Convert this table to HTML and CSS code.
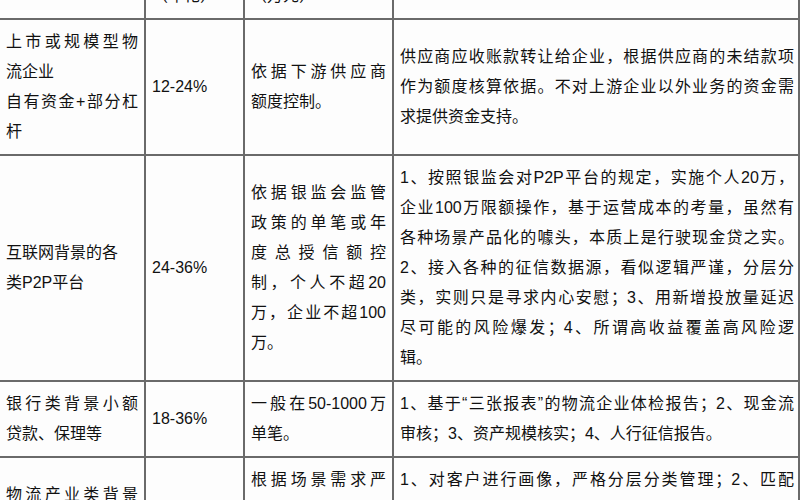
FILE: index.html
```html
<!DOCTYPE html>
<html lang="zh-CN">
<head>
<meta charset="utf-8">
<title>供应链金融对比</title>
<link rel="stylesheet" href="styles.css">
</head>
<body>
<table class="grid">
  <colgroup>
    <col class="c1"><col class="c2"><col class="c3"><col class="c4">
  </colgroup>
  <thead>
    <tr>
      <th>资金来源</th>
      <th><span class="ln end">资金成本</span><span class="ln end">（年化）</span></th>
      <th><span class="ln end">授信额度</span><span class="ln end">（万元）</span></th>
      <th>风控措施</th>
    </tr>
  </thead>
  <tbody>
    <tr>
      <td>
        <span class="ln">上市或规模型物</span><span class="ln end">流企业</span>
        <span class="ln">自有资金+部分杠</span><span class="ln end">杆</span>
      </td>
      <td>12-24%</td>
      <td><span class="ln">依据下游供应商</span><span class="ln end">额度控制。</span></td>
      <td class="wide">
        <span class="ln">供应商应收账款转让给企业，根据供应商的未结款项</span>
        <span class="ln">作为额度核算依据。不对上游企业以外业务的资金需</span>
        <span class="ln end">求提供资金支持。</span>
      </td>
    </tr>
    <tr>
      <td class="centered"><span class="ln end">互联网背景的各</span><span class="ln end">类P2P平台</span></td>
      <td>24-36%</td>
      <td>
        <span class="ln">依据银监会监管</span><span class="ln">政策的单笔或年</span>
        <span class="ln">度总授信额控</span><span class="ln">制，个人不超20</span>
        <span class="ln">万，企业不超100</span><span class="ln end">万。</span>
      </td>
      <td class="wide">
        <span class="ln">1、按照银监会对P2P平台的规定，实施个人20万，</span>
        <span class="ln">企业100万限额操作，基于运营成本的考量，虽然有</span>
        <span class="ln">各种场景产品化的噱头，本质上是行驶现金贷之实。</span>
        <span class="ln">2、接入各种的征信数据源，看似逻辑严谨，分层分</span>
        <span class="ln">类，实则只是寻求内心安慰；3、用新增投放量延迟</span>
        <span class="ln">尽可能的风险爆发；4、所谓高收益覆盖高风险逻</span>
        <span class="ln end">辑。</span>
      </td>
    </tr>
    <tr>
      <td><span class="ln">银行类背景小额</span><span class="ln end">贷款、保理等</span></td>
      <td>18-36%</td>
      <td><span class="ln">一般在50-1000万</span><span class="ln end">单笔。</span></td>
      <td class="wide">
        <span class="ln">1、基于“三张报表”的物流企业体检报告；2、现金流</span>
        <span class="ln end">审核；3、资产规模核实；4、人行征信报告。</span>
      </td>
    </tr>
    <tr>
      <td><span class="ln">物流产业类背景</span><span class="ln end">的供应链平台</span></td>
      <td>12-18%</td>
      <td>
        <span class="ln">根据场景需求严</span><span class="ln">格控制授信额度</span>
        <span class="ln end">与单笔金额。</span>
      </td>
      <td class="wide">
        <span class="ln">1、对客户进行画像，严格分层分类管理；2、匹配</span>
        <span class="ln">不同产品和服务，严格控制授信规模；3、动态监控</span>
        <span class="ln end">货物与资金流向。</span>
      </td>
    </tr>
  </tbody>
</table>
</body>
</html>
```

FILE: styles.css
```css
html, body {
  margin: 0;
  padding: 0;
  background: #fdfdfd;
  overflow: hidden;
}

body {
  width: 800px;
  height: 500px;
  font-family: "Liberation Sans", "Noto Sans CJK SC", sans-serif;
  font-size: 16px;
  color: #111111;
}

.grid {
  border-collapse: collapse;
  table-layout: fixed;
  width: 800px;
  margin-top: -58px;
  margin-left: -2px;
}

.c1 { width: 146px; }
.c2 { width: 99px; }
.c3 { width: 149px; }
.c4 { width: 406px; }

.grid th,
.grid td {
  border: 2px solid #6a6a6a;
  padding: 7px 6px;
  line-height: 30px;
  vertical-align: middle;
  text-align: left;
  font-weight: normal;
}

.grid th {
  text-align: center;
}

.grid td.wide {
  padding-right: 4px;
}

.grid td.centered {
  text-align: center;
}

.ln {
  display: block;
  text-align: justify;
  text-align-last: justify;
}

.ln.end {
  text-align-last: auto;
}
```
